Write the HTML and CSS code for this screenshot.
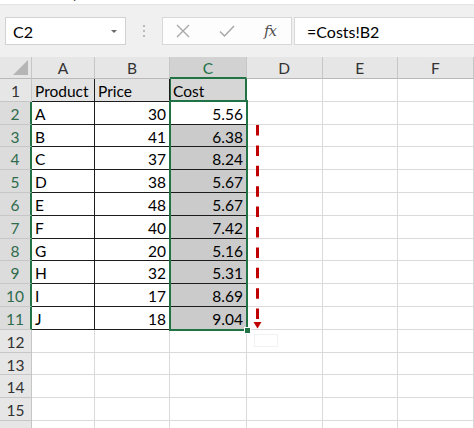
FILE: index.html
```html
<!DOCTYPE html>
<html>
<head>
<meta charset="utf-8">
<link rel="stylesheet" href="styles.css">
</head>
<body>
<div class="page">
  <div class="titlestrip"><span class="title">p</span></div>
  <div class="fbar">
    <div class="namebox"><span>C2</span><span class="caret"></span></div>
    <div class="grip"><i></i><i></i><i></i></div>
    <div class="fxbox">
      <svg class="ico" width="16" height="16" viewBox="0 0 16 16"><path d="M2 2 L14 14 M14 2 L2 14" stroke="#a8a8a8" stroke-width="1.4" fill="none"/></svg>
      <svg class="ico" width="18" height="16" viewBox="0 0 18 16"><path d="M2 8.5 L6.5 13 L16 3" stroke="#a8a8a8" stroke-width="1.5" fill="none"/></svg>
      <span class="fx">fx</span>
    </div>
    <div class="formula">=Costs!B2</div>
  </div>

  <div class="sheet">
    <div class="c hd corner"><span class="tri"></span></div>
    <div class="c hd">A</div>
    <div class="c hd">B</div>
    <div class="c hd on">C</div>
    <div class="c hd">D</div>
    <div class="c hd">E</div>
    <div class="c hd">F</div>

    <div class="c rh">1</div>
    <div class="c t th">Product</div>
    <div class="c t th">Price</div>
    <div class="c t th c1">Cost</div>
    <div class="c"></div><div class="c"></div><div class="c"></div>

    <div class="c rh on">2</div>
    <div class="c t">A</div>
    <div class="c t num">30</div>
    <div class="c t num">5.56</div>
    <div class="c"></div><div class="c"></div><div class="c"></div>

    <div class="c rh on">3</div>
    <div class="c t">B</div>
    <div class="c t num">41</div>
    <div class="c t num shade">6.38</div>
    <div class="c"></div><div class="c"></div><div class="c"></div>

    <div class="c rh on">4</div>
    <div class="c t">C</div>
    <div class="c t num">37</div>
    <div class="c t num shade">8.24</div>
    <div class="c"></div><div class="c"></div><div class="c"></div>

    <div class="c rh on">5</div>
    <div class="c t">D</div>
    <div class="c t num">38</div>
    <div class="c t num shade">5.67</div>
    <div class="c"></div><div class="c"></div><div class="c"></div>

    <div class="c rh on">6</div>
    <div class="c t">E</div>
    <div class="c t num">48</div>
    <div class="c t num shade">5.67</div>
    <div class="c"></div><div class="c"></div><div class="c"></div>

    <div class="c rh on">7</div>
    <div class="c t">F</div>
    <div class="c t num">40</div>
    <div class="c t num shade">7.42</div>
    <div class="c"></div><div class="c"></div><div class="c"></div>

    <div class="c rh on">8</div>
    <div class="c t">G</div>
    <div class="c t num">20</div>
    <div class="c t num shade">5.16</div>
    <div class="c"></div><div class="c"></div><div class="c"></div>

    <div class="c rh on">9</div>
    <div class="c t">H</div>
    <div class="c t num">32</div>
    <div class="c t num shade">5.31</div>
    <div class="c"></div><div class="c"></div><div class="c"></div>

    <div class="c rh on">10</div>
    <div class="c t">I</div>
    <div class="c t num">17</div>
    <div class="c t num shade">8.69</div>
    <div class="c"></div><div class="c"></div><div class="c"></div>

    <div class="c rh on">11</div>
    <div class="c t">J</div>
    <div class="c t num">18</div>
    <div class="c t num shade">9.04</div>
    <div class="c"></div><div class="c"></div><div class="c"></div>

    <div class="c rh">12</div>
    <div class="c"></div><div class="c"></div><div class="c"></div><div class="c"></div><div class="c"></div><div class="c"></div>
    <div class="c rh">13</div>
    <div class="c"></div><div class="c"></div><div class="c"></div><div class="c"></div><div class="c"></div><div class="c"></div>
    <div class="c rh">14</div>
    <div class="c"></div><div class="c"></div><div class="c"></div><div class="c"></div><div class="c"></div><div class="c"></div>
    <div class="c rh">15</div>
    <div class="c"></div><div class="c"></div><div class="c"></div><div class="c"></div><div class="c"></div><div class="c"></div>
    <div class="c rh">16</div>
    <div class="c"></div><div class="c"></div><div class="c"></div><div class="c"></div><div class="c"></div><div class="c"></div>
  </div>

  <div class="selection"></div>
  <div class="handle"></div>
  <div class="autofill"></div>
  <svg class="arrow" width="16" height="212" viewBox="0 0 16 212">
    <line x1="7.5" y1="5" x2="7.5" y2="199" stroke="#c00000" stroke-width="3" stroke-dasharray="10.5 9.9"/>
    <polygon points="3.5,202 11.5,202 7.5,208.5" fill="#c00000"/>
  </svg>
</div>
</body>
</html>
```

FILE: styles.css
```css
* { box-sizing: border-box; }
html, body { margin: 0; padding: 0; }
body {
  width: 474px;
  height: 428px;
  overflow: hidden;
  background: #f0f0f0;
  font-family: Lato, "Liberation Sans", sans-serif;
  color: #000;
}
.page { position: relative; width: 474px; height: 428px; overflow: hidden; }

.titlestrip {
  height: 4px;
  background: #fff;
  overflow: hidden;
  box-shadow: 0 1px 2px rgba(0,0,0,0.06);
  position: relative;
}
.title {
  display: block;
  margin-left: 73px;
  margin-top: -13px;
  font-size: 14px;
  line-height: 14px;
  color: #444;
}

.fbar {
  height: 53px;
  padding: 13px 0 12px 5px;
  display: flex;
  align-items: stretch;
}
.namebox {
  width: 121px;
  background: #fff;
  border: 1px solid #d2d2d2;
  display: flex;
  align-items: center;
  justify-content: space-between;
  padding: 0 8px 0 7px;
  font-size: 16px;
}
.caret {
  width: 0; height: 0;
  border-left: 3.5px solid transparent;
  border-right: 3.5px solid transparent;
  border-top: 3.5px solid #6a6a6a;
  margin-top: 1px;
}
.grip {
  width: 36px;
  display: flex;
  flex-direction: column;
  align-items: center;
  justify-content: center;
  gap: 3px;
}
.grip i {
  display: block;
  width: 2px; height: 2px;
  background: #a9a9a9;
  border-radius: 1px;
}
.fxbox {
  width: 130px;
  background: #fdfdfd;
  border: 1px solid #d8d8d8;
  display: flex;
  align-items: center;
  padding-left: 12px;
}
.fxbox .ico { display: block; }
.fxbox .ico:first-child { margin-right: 27px; }
.fxbox .ico:nth-child(2) { margin-right: 28px; }
.fx {
  font-family: "DejaVu Serif", "Liberation Serif", serif;
  font-style: italic;
  font-size: 15px;
  color: #505050;
  letter-spacing: -1px;
}
.formula {
  flex: 1;
  margin-left: 2px;
  background: #fff;
  border: 1px solid #d8d8d8;
  border-right: none;
  display: flex;
  align-items: center;
  padding-left: 12px;
  font-size: 16px;
}

.sheet {
  display: grid;
  grid-template-columns: 32px 63px 75px 77px 75.5px 75.5px 76px;
  grid-template-rows: 22px;
  grid-auto-rows: 22.8px;
  background: #fff;
}
.c {
  border-right: 1px solid #dadada;
  border-bottom: 1px solid #dadada;
  font-size: 15.5px;
  line-height: 22px;
  padding: 1px 3px 0 3px;
  white-space: nowrap;
  overflow: hidden;
}
.hd {
  background: #e6e6e6;
  color: #333;
  text-align: center;
  border-right-color: #c6c6c6;
  border-bottom-color: #b9b9b9;
  padding: 0;
  line-height: 22px;
}
.hd.on {
  background: #d2d2d2;
  color: #217346;
  border-bottom: 2px solid #217346;
}
.corner { position: relative; }
.tri {
  position: absolute;
  right: 3px; bottom: 3px;
  width: 0; height: 0;
  border-left: 15px solid transparent;
  border-bottom: 15px solid #b5b5b5;
}
.rh {
  background: #e6e6e6;
  color: #333;
  text-align: center;
  border-right-color: #c6c6c6;
  border-bottom-color: #c6c6c6;
  padding: 1px 0 0 0;
}
.rh.on {
  background: #dcdcdc;
  color: #2f6b4c;
  border-right: 2px solid #217346;
}
.t {
  border-right-color: #1c1c1c;
  border-bottom-color: #1c1c1c;
}
.th { background: #e3e3e3; }
.c1 {
  background: #d6d6d6;
  box-shadow: inset 1px 0 0 #217346;
  border-right: 2px solid #217346;
}
.num { text-align: right; }
.shade { background: #cbcbcb; }

.selection {
  position: absolute;
  left: 169px;
  top: 100px;
  width: 79px;
  height: 231px;
  border: 2px solid #217346;
  pointer-events: none;
}
.handle {
  position: absolute;
  left: 244px;
  top: 327px;
  width: 7px;
  height: 7px;
  background: #217346;
  border: 1px solid #fff;
}
.autofill {
  position: absolute;
  left: 254px;
  top: 334px;
  width: 24px;
  height: 13px;
  border: 1px solid #f2f2f2;
}
.arrow {
  position: absolute;
  left: 250px;
  top: 120px;
}
```
